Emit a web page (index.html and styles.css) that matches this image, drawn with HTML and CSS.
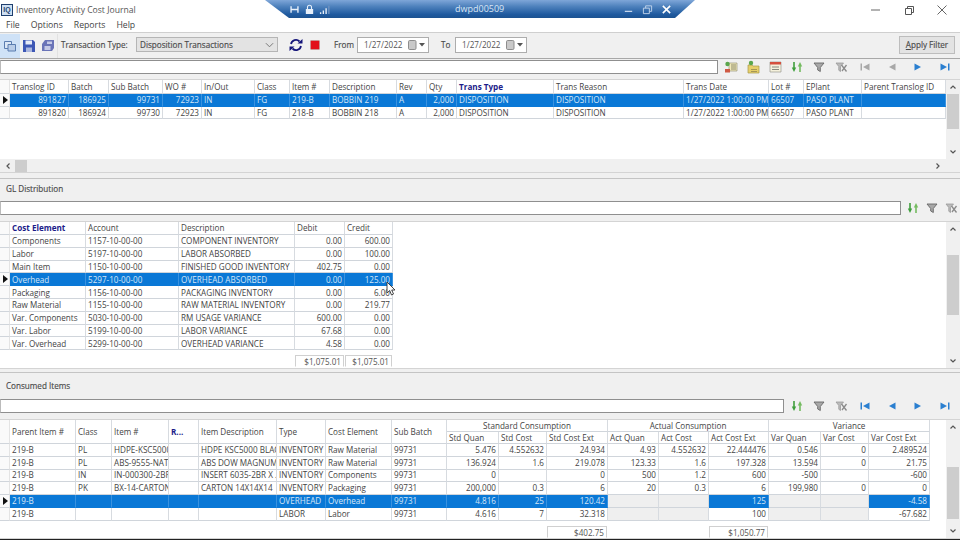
FILE: index.html
```html
<!DOCTYPE html>
<html lang="en">
<head>
<meta charset="utf-8">
<title>Inventory Activity Cost Journal</title>
<link rel="stylesheet" href="styles.css">
</head>
<body>
<svg class="defs" width="0" height="0" aria-hidden="true">
  <symbol id="i-sort" viewBox="0 0 14 14"><path d="M4 2v6" stroke="#3f9e3c" stroke-width="1.600"/><path d="M1.800 7.500 4 12l2.200-4.500z" fill="#3f9e3c"/><path d="M10 12V6" stroke="#74bb60" stroke-width="1.600"/><path d="M7.800 6.500 10 2l2.200 4.500z" fill="#74bb60"/></symbol>
  <symbol id="i-filter" viewBox="0 0 14 14"><path d="M2 3h10L8.300 7.500V11.500L5.700 10V7.500z" fill="#a8a8a8" stroke="#666" stroke-width=".9"/></symbol>
  <symbol id="i-unfilter" viewBox="0 0 14 14"><path d="M2 3h7.500L6.500 6.500V11.500L4.800 10.300V6.500z" fill="#bbb" stroke="#999" stroke-width=".8"/><path d="M7.500 5l5 6.500M12.500 5 8 11" stroke="#8a8a8a" stroke-width="1.300" fill="none"/></symbol>
  <symbol id="i-first" viewBox="0 0 14 14"><path d="M2.500 3.500h1.500v7H2.500zM11.500 3.500v7L5 7z"/></symbol>
  <symbol id="i-prev" viewBox="0 0 14 14"><path d="M10.500 3.500v7L4 7z"/></symbol>
  <symbol id="i-next" viewBox="0 0 14 14"><path d="M3.500 3.500v7L10 7z"/></symbol>
  <symbol id="i-last" viewBox="0 0 14 14"><path d="M10 3.500h1.500v7H10zM2.500 3.500v7L9 7z"/></symbol>
  <symbol id="i-add" viewBox="0 0 14 14"><path d="M5 3h8v8H5z" fill="#f0e9b8" stroke="#9a9678" stroke-width=".7"/><path d="M7 5h5M7 7h5M7 9h5" stroke="#8d8a6c"/><circle cx="3.500" cy="4" r="2.200" fill="#5aa64c"/><path d="M1 9h5v3.500H1z" fill="#cf5a44"/></symbol>
  <symbol id="i-folder" viewBox="0 0 14 14"><path d="M2 5h4l1 1h6v7H2z" fill="#e6cf6a" stroke="#a89a4a" stroke-width=".7"/><path d="M5 9.500h6M5 11.500h6" stroke="#a59656"/><circle cx="5" cy="3" r="2.200" fill="#5aa64c"/></symbol>
  <symbol id="i-del" viewBox="0 0 14 14"><path d="M2 2h11v10H2z" fill="#f5f1dc" stroke="#9a9a90" stroke-width=".7"/><path d="M2 2h11v2.500H2z" fill="#d5503e"/><path d="M4 7h7M4 9.500h7" stroke="#8a8a80"/></symbol>
  <symbol id="i-cal" viewBox="0 0 18 10"><rect x=".5" y=".5" width="7.500" height="9" rx="1.200" fill="#c9c9c9" stroke="#8d8d8d"/><path d="M11 3h6l-3 3.500z" fill="#555"/></symbol>
</svg>

<header class="titlebar">
  <span class="app-icon">IQ</span>
  <span class="app-title">Inventory Activity Cost Journal</span>
  <div class="win-controls">
    <svg class="wc" viewBox="0 0 12 12"><path d="M1 6h9" stroke="#666"/></svg>
    <svg class="wc" viewBox="0 0 12 12"><path d="M2.500 4.500h6v6h-6zM4.500 4.500v-2h6v6h-2" fill="none" stroke="#555"/></svg>
    <svg class="wc" viewBox="0 0 12 12"><path d="M1.500 1.500l9 9M10.500 1.500l-9 9" stroke="#666"/></svg>
  </div>
</header>

<div class="remote-bar">
  <div class="remote-left">
    <svg class="rb" viewBox="0 0 12 12"><path d="M1.500 2.500v7h1.500V6.800h6V9.500h1.500v-7H9v2.700H3V2.500z" fill="#e8f0fa"/></svg>
    <svg class="rb" viewBox="0 0 12 12"><path d="M2 5.500h8V11H2z" fill="#e8f0fa"/><path d="M3.800 5.500V3.500a2.200 2.200 0 0 1 4.400 0v2" fill="none" stroke="#e8f0fa" stroke-width="1.200"/></svg>
    <svg class="rb" viewBox="0 0 12 12"><path d="M1 9h1.500v2H1zM4 7h1.500v4H4zM7 4.500h1.500V11H7z" fill="#e8f0fa"/><path d="M10 2h1.500v9H10z" fill="#6f92c0"/></svg>
  </div>
  <span class="remote-name">dwpd00509</span>
  <div class="remote-right">
    <svg class="rb" viewBox="0 0 12 12"><path d="M2 8h8" stroke="#c5d6ec" stroke-width="1.200"/></svg>
    <svg class="rb" viewBox="0 0 12 12"><path d="M1.500 4.500h6.500v6H1.500zM4 4.500V2h6.500v6H8" fill="none" stroke="#c5d6ec"/></svg>
    <svg class="rb" viewBox="0 0 12 12"><path d="M2 2l8 8M10 2l-8 8" stroke="#fff" stroke-width="1.700"/></svg>
  </div>
</div>

<nav class="menubar">
  <span>File</span><span>Options</span><span>Reports</span><span>Help</span>
</nav>

<div class="toolbar">
  <div class="tb-group">
    <span class="tb-btn on"><svg viewBox="0 0 14 14"><path d="M1.500 2.500h7v7h-7z" fill="#dbe7f6" stroke="#5a7db0"/><path d="M5 5.500h7.500v6.500H5z" fill="#b9cde8" stroke="#5a7db0"/></svg></span>
    <span class="tb-btn"><svg viewBox="0 0 14 14"><path d="M1 1h10l2 2v10H1z" fill="#3d57b5"/><path d="M3.500 1.500h6.500v4H3.500z" fill="#e6ebf7"/><path d="M4 8.500h6V13H4z" fill="#aab6de"/></svg></span>
    <span class="tb-btn"><svg viewBox="0 0 14 14"><path d="M4 1h9v8l-2 3H1V5z" fill="#6a74b8"/><path d="M6 2.500h5V5H6zM3.500 7h6v4h-6z" fill="#c4c9e6"/></svg></span>
  </div>
  <label class="tb-label">Transaction Type:</label>
  <div class="select">
    <span>Disposition Transactions</span>
    <svg viewBox="0 0 10 6"><path d="M1 1l4 4 4-4" fill="none" stroke="#777" stroke-width="1.100"/></svg>
  </div>
  <svg class="refresh" viewBox="0 0 14 14"><path d="M2 6a5 5 0 0 1 8.500-2.500" fill="none" stroke="#14147a" stroke-width="1.800"/><path d="M8.500 5.500h5V1z" fill="#14147a"/><path d="M12 8a5 5 0 0 1-8.500 2.500" fill="none" stroke="#14147a" stroke-width="1.800"/><path d="M5.500 8.500h-5V13z" fill="#14147a"/></svg>
  <span class="stop"></span>
  <label class="tb-label from">From</label>
  <div class="datebox"><span>1/27/2022</span><svg viewBox="0 0 18 10"><use href="#i-cal"/></svg></div>
  <label class="tb-label to">To</label>
  <div class="datebox"><span>1/27/2022</span><svg viewBox="0 0 18 10"><use href="#i-cal"/></svg></div>
  <button class="apply"><u>A</u>pply Filter</button>
</div>

<div class="filter-row f-first">
  <div class="filter-input"></div>
  <span class="tool"><svg><use href="#i-add"/></svg></span>
  <span class="tool"><svg><use href="#i-folder"/></svg></span>
  <span class="tool"><svg><use href="#i-del"/></svg></span>
  <span class="tool"><svg><use href="#i-sort"/></svg></span>
  <span class="tool"><svg><use href="#i-filter"/></svg></span>
  <span class="tool"><svg><use href="#i-unfilter"/></svg></span>
  <span class="nav off"><svg><use href="#i-first"/></svg></span>
  <span class="nav off"><svg><use href="#i-prev"/></svg></span>
  <span class="nav"><svg><use href="#i-next"/></svg></span>
  <span class="nav"><svg><use href="#i-last"/></svg></span>
</div>

<section class="grid grid-a">
  <div class="grid-main">
    <div class="grid-scroll">
      <table class="t ta">
        <colgroup><col><col><col><col><col><col><col><col><col><col><col><col><col><col><col><col><col></colgroup>
        <thead><tr><th class="ind"></th><th>Translog ID</th><th>Batch</th><th>Sub Batch</th><th>WO #</th><th>In/Out</th><th>Class</th><th>Item #</th><th>Description</th><th>Rev</th><th>Qty</th><th class="sorted">Trans Type</th><th>Trans Reason</th><th>Trans Date</th><th>Lot #</th><th>EPlant</th><th>Parent Translog ID</th></tr></thead>
        <tbody>
          <tr class="sel"><td class="ind"><i class="arrow"></i></td><td class="n">891827</td><td class="n">186925</td><td class="n">99731</td><td class="n">72923</td><td>IN</td><td>FG</td><td>219-B</td><td>BOBBIN 219</td><td>A</td><td class="n">2,000</td><td>DISPOSITION</td><td>DISPOSITION</td><td>1/27/2022 1:00:00 PM</td><td>66507</td><td>PASO PLANT</td><td></td></tr>
          <tr><td class="ind"></td><td class="n">891820</td><td class="n">186924</td><td class="n">99730</td><td class="n">72923</td><td>IN</td><td>FG</td><td>218-B</td><td>BOBBIN 218</td><td>A</td><td class="n">2,000</td><td>DISPOSITION</td><td>DISPOSITION</td><td>1/27/2022 1:00:00 PM</td><td>66507</td><td>PASO PLANT</td><td></td></tr>
        </tbody>
      </table>
    </div>
    <div class="hscroll">
      <svg viewBox="0 0 8 8"><path d="M5.500 1.500 3 4l2.500 2.500" fill="none" stroke="#555" stroke-width="1.200"/></svg>
      <span class="hthumb"></span>
      <svg viewBox="0 0 8 8"><path d="M2.500 1.500 5 4 2.500 6.500" fill="none" stroke="#555" stroke-width="1.200"/></svg>
    </div>
  </div>
  <div class="vscroll vs-a">
    <svg viewBox="0 0 8 8"><path d="M1.500 5.500 4 3l2.500 2.500" fill="none" stroke="#555" stroke-width="1.200"/></svg>
    <span class="vtrack"><span class="vthumb"></span></span>
    <svg viewBox="0 0 8 8"><path d="M1.500 2.500 4 5l2.500-2.500" fill="none" stroke="#555" stroke-width="1.200"/></svg>
  </div>
</section>

<div class="panel-head ph-gl">GL Distribution</div>
<div class="filter-row f-gl">
  <div class="filter-input"></div>
  <span class="tool narrow"><svg><use href="#i-sort"/></svg></span>
  <span class="tool narrow"><svg><use href="#i-filter"/></svg></span>
  <span class="tool narrow"><svg><use href="#i-unfilter"/></svg></span>
</div>

<section class="grid grid-b">
  <div class="grid-main">
    <table class="t tb">
      <colgroup><col><col><col><col><col><col></colgroup>
      <thead><tr><th class="ind"></th><th class="sorted">Cost Element</th><th>Account</th><th>Description</th><th>Debit</th><th>Credit</th></tr></thead>
      <tbody>
        <tr><td class="ind"></td><td>Components</td><td>1157-10-00-00</td><td>COMPONENT INVENTORY</td><td class="n">0.00</td><td class="n">600.00</td></tr>
        <tr><td class="ind"></td><td>Labor</td><td>5197-10-00-00</td><td>LABOR ABSORBED</td><td class="n">0.00</td><td class="n">100.00</td></tr>
        <tr><td class="ind"></td><td>Main Item</td><td>1150-10-00-00</td><td>FINISHED GOOD INVENTORY</td><td class="n">402.75</td><td class="n">0.00</td></tr>
        <tr class="sel"><td class="ind"><i class="arrow"></i></td><td>Overhead</td><td>5297-10-00-00</td><td>OVERHEAD ABSORBED</td><td class="n">0.00</td><td class="n">125.00</td></tr>
        <tr><td class="ind"></td><td>Packaging</td><td>1156-10-00-00</td><td>PACKAGING INVENTORY</td><td class="n">0.00</td><td class="n">6.00</td></tr>
        <tr><td class="ind"></td><td>Raw Material</td><td>1155-10-00-00</td><td>RAW MATERIAL INVENTORY</td><td class="n">0.00</td><td class="n">219.77</td></tr>
        <tr><td class="ind"></td><td>Var. Components</td><td>5030-10-00-00</td><td>RM USAGE VARIANCE</td><td class="n">600.00</td><td class="n">0.00</td></tr>
        <tr><td class="ind"></td><td>Var. Labor</td><td>5199-10-00-00</td><td>LABOR VARIANCE</td><td class="n">67.68</td><td class="n">0.00</td></tr>
        <tr><td class="ind"></td><td>Var. Overhead</td><td>5299-10-00-00</td><td>OVERHEAD VARIANCE</td><td class="n">4.58</td><td class="n">0.00</td></tr>
      </tbody>
      <tfoot><tr><td colspan="4"></td><td><div class="sum">$1,075.01</div></td><td><div class="sum">$1,075.01</div></td></tr></tfoot>
    </table>
    <svg class="cursor" viewBox="0 0 10 15"><path d="M1 1v11l2.700-2.500L5.500 14l2-1-1.800-4H9z" fill="#fff" stroke="#333" stroke-width=".9"/></svg>
  </div>
  <div class="vscroll vs-b">
    <svg viewBox="0 0 8 8"><path d="M1.500 5.500 4 3l2.500 2.500" fill="none" stroke="#555" stroke-width="1.200"/></svg>
    <span class="vtrack"><span class="vthumb"></span></span>
    <svg viewBox="0 0 8 8"><path d="M1.500 2.500 4 5l2.500-2.500" fill="none" stroke="#555" stroke-width="1.200"/></svg>
  </div>
</section>

<div class="panel-head ph-ci">Consumed Items</div>
<div class="filter-row f-ci">
  <div class="filter-input"></div>
  <span class="tool"><svg><use href="#i-sort"/></svg></span>
  <span class="tool"><svg><use href="#i-filter"/></svg></span>
  <span class="tool"><svg><use href="#i-unfilter"/></svg></span>
  <span class="nav"><svg><use href="#i-first"/></svg></span>
  <span class="nav"><svg><use href="#i-prev"/></svg></span>
  <span class="nav"><svg><use href="#i-next"/></svg></span>
  <span class="nav"><svg><use href="#i-last"/></svg></span>
</div>

<section class="grid grid-c">
  <div class="grid-main">
    <table class="t tc">
      <colgroup><col><col><col><col><col><col><col><col><col><col><col><col><col><col><col><col><col><col></colgroup>
      <thead>
        <tr class="band">
          <th class="ind" rowspan="2"></th><th rowspan="2">Parent Item #</th><th rowspan="2">Class</th><th rowspan="2">Item #</th><th rowspan="2" class="sorted">R...</th><th rowspan="2">Item Description</th><th rowspan="2">Type</th><th rowspan="2">Cost Element</th><th rowspan="2">Sub Batch</th>
          <th colspan="3" class="c">Standard Consumption</th><th colspan="3" class="c">Actual Consumption</th><th colspan="3" class="c">Variance</th>
        </tr>
        <tr class="band"><th>Std Quan</th><th>Std Cost</th><th>Std Cost Ext</th><th>Act Quan</th><th>Act Cost</th><th>Act Cost Ext</th><th>Var Quan</th><th>Var Cost</th><th>Var Cost Ext</th></tr>
      </thead>
      <tbody>
        <tr><td class="ind"></td><td>219-B</td><td>PL</td><td>HDPE-KSC5000</td><td></td><td>HDPE KSC5000 BLACK</td><td>INVENTORY</td><td>Raw Material</td><td>99731</td><td class="n">5.476</td><td class="n">4.552632</td><td class="n">24.934</td><td class="n">4.93</td><td class="n">4.552632</td><td class="n">22.444476</td><td class="n">0.546</td><td class="n">0</td><td class="n">2.489524</td></tr>
        <tr><td class="ind"></td><td>219-B</td><td>PL</td><td>ABS-9555-NAT</td><td></td><td>ABS DOW MAGNUM</td><td>INVENTORY</td><td>Raw Material</td><td>99731</td><td class="n">136.924</td><td class="n">1.6</td><td class="n">219.078</td><td class="n">123.33</td><td class="n">1.6</td><td class="n">197.328</td><td class="n">13.594</td><td class="n">0</td><td class="n">21.75</td></tr>
        <tr><td class="ind"></td><td>219-B</td><td>IN</td><td>IN-000300-2BR</td><td></td><td>INSERT 6035-2BR X ..</td><td>INVENTORY</td><td>Components</td><td>99731</td><td class="n">0</td><td class="n"></td><td class="n">0</td><td class="n">500</td><td class="n">1.2</td><td class="n">600</td><td class="n">-500</td><td class="n"></td><td class="n">-600</td></tr>
        <tr><td class="ind"></td><td>219-B</td><td>PK</td><td>BX-14-CARTON</td><td></td><td>CARTON 14X14X14</td><td>INVENTORY</td><td>Packaging</td><td>99731</td><td class="n">200,000</td><td class="n">0.3</td><td class="n">6</td><td class="n">20</td><td class="n">0.3</td><td class="n">6</td><td class="n">199,980</td><td class="n">0</td><td class="n">0</td></tr>
        <tr class="sel"><td class="ind"><i class="arrow"></i></td><td>219-B</td><td></td><td></td><td></td><td></td><td>OVERHEAD</td><td>Overhead</td><td>99731</td><td class="n">4.816</td><td class="n">25</td><td class="n">120.42</td><td class="na"></td><td class="na"></td><td class="n">125</td><td class="na"></td><td class="na"></td><td class="n">-4.58</td></tr>
        <tr><td class="ind"></td><td>219-B</td><td></td><td></td><td></td><td></td><td>LABOR</td><td>Labor</td><td>99731</td><td class="n">4.616</td><td class="n">7</td><td class="n">32.318</td><td class="na"></td><td class="na"></td><td class="n">100</td><td class="na"></td><td class="na"></td><td class="n">-67.682</td></tr>
      </tbody>
      <tfoot><tr><td colspan="11"></td><td><div class="sum">$402.75</div></td><td colspan="2"></td><td><div class="sum">$1,050.77</div></td><td colspan="3"></td></tr></tfoot>
    </table>
  </div>
  <div class="vscroll vs-c">
    <svg viewBox="0 0 8 8"><path d="M1.500 5.500 4 3l2.500 2.500" fill="none" stroke="#555" stroke-width="1.200"/></svg>
    <span class="vtrack"><span class="vthumb"></span></span>
    <svg viewBox="0 0 8 8"><path d="M1.500 2.500 4 5l2.500-2.500" fill="none" stroke="#555" stroke-width="1.200"/></svg>
  </div>
</section>
<div class="screen-edge"></div>
</body>
</html>
```
FILE: styles.css
```css
* { box-sizing: border-box; }
html, body { margin: 0; padding: 0; }
body {
  width: 960px; height: 540px; overflow: hidden; position: relative;
  background: #f0f0f0; color: #444;
  font-family: "Open Sans", "Noto Sans", sans-serif; font-size: 8.15px; line-height: 12px;
}
.defs { position: absolute; }

/* window chrome */
.titlebar { height: 18px; background: #fff; display: flex; align-items: center; padding: 1px 0 0 1px; }
.app-icon {
  width: 12px; height: 12px; border: 1.5px solid #1f3f6e; background: #cfe0f2; color: #1f3f6e;
  font: bold 7px/9px "Liberation Sans", sans-serif; text-align: center; margin-right: 3px;
}
.app-title { font-size: 8.6px; color: #555; }
.win-controls { margin-left: auto; display: flex; padding-right: 12px; gap: 21px; }
.wc { width: 12px; height: 12px; display: block; }

.remote-bar {
  position: absolute; left: 265px; top: 0; width: 430px; height: 18px;
  background: linear-gradient(#7ea6d8 0, #4f82bd 35%, #1f5a9f 80%, #1c5290 100%);
  clip-path: polygon(0 0, 100% 0, 410px 100%, 24px 100%);
  display: flex; align-items: center; color: #d9e6f5; font-size: 9px;
  padding: 0 23px 0 24px;
}
.remote-left, .remote-right { display: flex; gap: 4px; }
.rb { width: 11px; height: 11px; display: block; }
.remote-name { margin-left: 125px; }
.remote-right { margin-left: auto; gap: 8px; }

.menubar { height: 14px; background: #fff; display: flex; gap: 11px; padding: 1px 0 0 6px; font-size: 8.7px; line-height: 13px; color: #444; }

.toolbar {
  height: 27px; border-top: 1.5px solid #cfcfcf; border-bottom: 1.5px solid #a8a8a8; padding-bottom: 2px;
  display: flex; align-items: center; background: #f0f0f0;
}
.tb-group { display: flex; height: 24px; margin-top: 2px; border-right: 1px solid #e2e2e2; width: 58px; }
.tb-btn { width: 19px; height: 24px; display: flex; align-items: center; justify-content: center; }
.tb-btn svg { width: 14px; height: 14px; }
.tb-btn.on { background: #cfe2f7; width: 20px; }
.tb-label { color: #4a4a4a; -webkit-text-stroke: .15px #4a4a4a; }
.tb-group + .tb-label { margin-left: 3px; width: 75px; }
.select {
  width: 142px; height: 15px; background: #e3e3e3; border: 1px solid #b5b5b5;
  display: flex; align-items: center; justify-content: space-between; padding: 0 3px; color: #4a4a4a;
  -webkit-text-stroke: .15px #4a4a4a;
}
.select svg { width: 9px; height: 6px; }
.refresh { width: 14px; height: 14px; margin-left: 11px; }
.stop { width: 8px; height: 8px; background: #e2101a; margin-left: 8px; box-shadow: 0 0 0 .5px #a33; }
.tb-label.from { margin-left: 15px; width: 23px; }
.tb-label.to { margin-left: 12px; width: 14px; }
.datebox {
  width: 72px; height: 16px; background: #fff; border: 1px solid #adadad; display: flex;
  align-items: center; justify-content: space-between; padding: 0 2px 0 6px; color: #555;
}
.datebox svg { width: 18px; height: 10px; }
.apply {
  margin-left: auto; margin-right: 5px; width: 56px; height: 18px; padding: 0; background: #e3e3e3;
  border: 1px solid #bdbdbd; font: inherit; color: #4a4a4a; -webkit-text-stroke: .15px #4a4a4a;
}

/* filter rows */
.filter-row { display: flex; align-items: center; padding-right: 2px; }
.f-first { height: 20px; padding-top: 1px; padding-bottom: 5px; }
.f-gl { height: 21px; padding: 1px 0 6px; }
.f-ci { height: 21px; padding-top: 1px; padding-bottom: 6px; }
.filter-input { flex: 1; height: 14px; background: #fff; border: 1px solid #8f8f8f; border-left-color: #bbb; margin-right: 2px; }
.tool { width: 22px; height: 14px; display: flex; justify-content: center; flex: none; }
.tool.narrow { width: 19px; }
.nav { width: 26.5px; height: 14px; display: flex; justify-content: center; flex: none; fill: #2a7fd0; }
.nav.off { fill: #a8a8a8; }
.tool svg, .nav svg { width: 14px; height: 14px; }

/* panels */
.panel-head { border-top: 1.5px solid #c4c4c4; padding-left: 6px; display: flex; align-items: center; color: #4a4a4a; -webkit-text-stroke: .15px #4a4a4a; }
.ph-gl { height: 22px; margin-top: 5px; padding-bottom: 1px; }
.ph-ci { height: 26px; margin-top: 3px; }

/* grids */
.grid { display: flex; background: #fff; border-top: 1px solid #d4d4d4; border-bottom: 1px solid #d4d4d4; }
.grid-a { height: 94px; }
.grid-b { height: 148px; }
.grid-c { height: 120px; }
.grid-main { flex: 1; min-width: 0; display: flex; flex-direction: column; position: relative; overflow: hidden; }
.grid-scroll { flex: 1; overflow: hidden; }

.t { border-collapse: separate; border-spacing: 0; table-layout: fixed; }
.t th, .t td {
  padding: 0 2px; font-weight: 400; text-align: left; white-space: nowrap; overflow: hidden;
  border-right: 1px solid #d7dbe0; border-bottom: 1px solid #d0d5db;
  vertical-align: middle; line-height: 10px;
}
.ta th, .ta td, .tb td { padding-top: 1px; }
.t td.n { text-align: right; }
.t th.c { text-align: center; }
.t th.sorted { color: #1c1c8a; font-weight: 700; }
.t .ind { background: #fafafa; padding: 0; position: relative; overflow: visible; border-right-color: #e4e4e4; }
.t tfoot td { border: 0; padding: 0 1px 0 0; vertical-align: top; }
.t tbody tr { height: 12.8px; }
.ta tbody tr { height: 12.7px; }
.ta thead tr { height: 14px; }
.tb thead tr { height: 13px; }
.tc thead tr { height: 12px; }
.t tr.sel td { background: #0a78d6; color: #d5e6f7; border-right-color: #3a92df; border-bottom-color: #0a78d6; }
.t tr.sel td.ind { background: #fafafa; border-bottom-color: #d0d5db; border-right-color: #e4e4e4; }
.t tr td.na, .t tr.sel td.na { background: #efefef; border-right-color: #d7dbe0; border-bottom-color: #d0d5db; }
.arrow {
  position: absolute; left: 3px; top: 2px; width: 0; height: 0;
  border-left: 5px solid #111; border-top: 4px solid transparent; border-bottom: 4px solid transparent;
}
.sum { margin-top: 5px; height: 12px; border: 1px solid #d0d0d0; border-bottom-color: #fff; text-align: right; padding: 0 2px; line-height: 11px; color: #555; }

/* column widths */
.ta { width: 946px; }
.ta col:nth-child(1) { width: 10px; } .ta col:nth-child(2) { width: 59px; } .ta col:nth-child(3) { width: 40px; }
.ta col:nth-child(4) { width: 54px; } .ta col:nth-child(5) { width: 39px; } .ta col:nth-child(6) { width: 53px; }
.ta col:nth-child(7) { width: 35px; } .ta col:nth-child(8) { width: 40px; } .ta col:nth-child(9) { width: 67px; }
.ta col:nth-child(10) { width: 30px; } .ta col:nth-child(11) { width: 30px; } .ta col:nth-child(12) { width: 97px; }
.ta col:nth-child(13) { width: 130px; } .ta col:nth-child(14) { width: 85px; } .ta col:nth-child(15) { width: 35px; }
.ta col:nth-child(16) { width: 58px; } .ta col:nth-child(17) { width: 84px; }

.tb { width: 393px; }
.tb col:nth-child(1) { width: 10px; } .tb col:nth-child(2) { width: 76px; } .tb col:nth-child(3) { width: 93px; }
.tb col:nth-child(4) { width: 116px; } .tb col:nth-child(5) { width: 50px; } .tb col:nth-child(6) { width: 48px; }

.tc { width: 930px; }
.tc col:nth-child(1) { width: 10px; } .tc col:nth-child(2) { width: 66px; } .tc col:nth-child(3) { width: 36px; }
.tc col:nth-child(4) { width: 57px; } .tc col:nth-child(5) { width: 30px; } .tc col:nth-child(6) { width: 78px; }
.tc col:nth-child(7) { width: 49px; } .tc col:nth-child(8) { width: 66px; } .tc col:nth-child(9) { width: 55px; }
.tc col:nth-child(10) { width: 52px; } .tc col:nth-child(11) { width: 48px; } .tc col:nth-child(12) { width: 61px; }
.tc col:nth-child(13) { width: 51px; } .tc col:nth-child(14) { width: 50px; } .tc col:nth-child(15) { width: 60px; }
.tc col:nth-child(16) { width: 52px; } .tc col:nth-child(17) { width: 48px; } .tc col:nth-child(18) { width: 61px; }

/* scrollbars */
.vscroll { width: 14px; flex: none; background: #f0f0f0; display: flex; flex-direction: column; align-items: center; }
.vscroll svg { width: 8px; height: 8px; flex: none; margin: 3px 0; }
.vtrack { flex: 1; width: 100%; display: flex; padding: 0 1px; }
.vthumb { width: 100%; background: #cdcdcd; }
.vs-a { padding-bottom: 13px; }
.vs-a .vthumb { height: 35px; }
.vs-b .vthumb { height: 60px; margin-top: 19px; }
.vs-c .vthumb { height: 52px; margin-top: 33px; }
.hscroll { height: 13px; background: #f0f0f0; display: flex; align-items: center; padding: 0 4px; flex: none; }
.hscroll svg { width: 8px; height: 8px; flex: none; }
.hthumb { width: 12px; height: 12px; background: #cdcdcd; margin-left: 3px; margin-right: auto; }

.cursor { position: absolute; left: 386px; top: 59px; width: 10px; height: 15px; }
.screen-edge { position: absolute; left: 0; right: 0; bottom: 0; height: 1px; background: #222; }
```
